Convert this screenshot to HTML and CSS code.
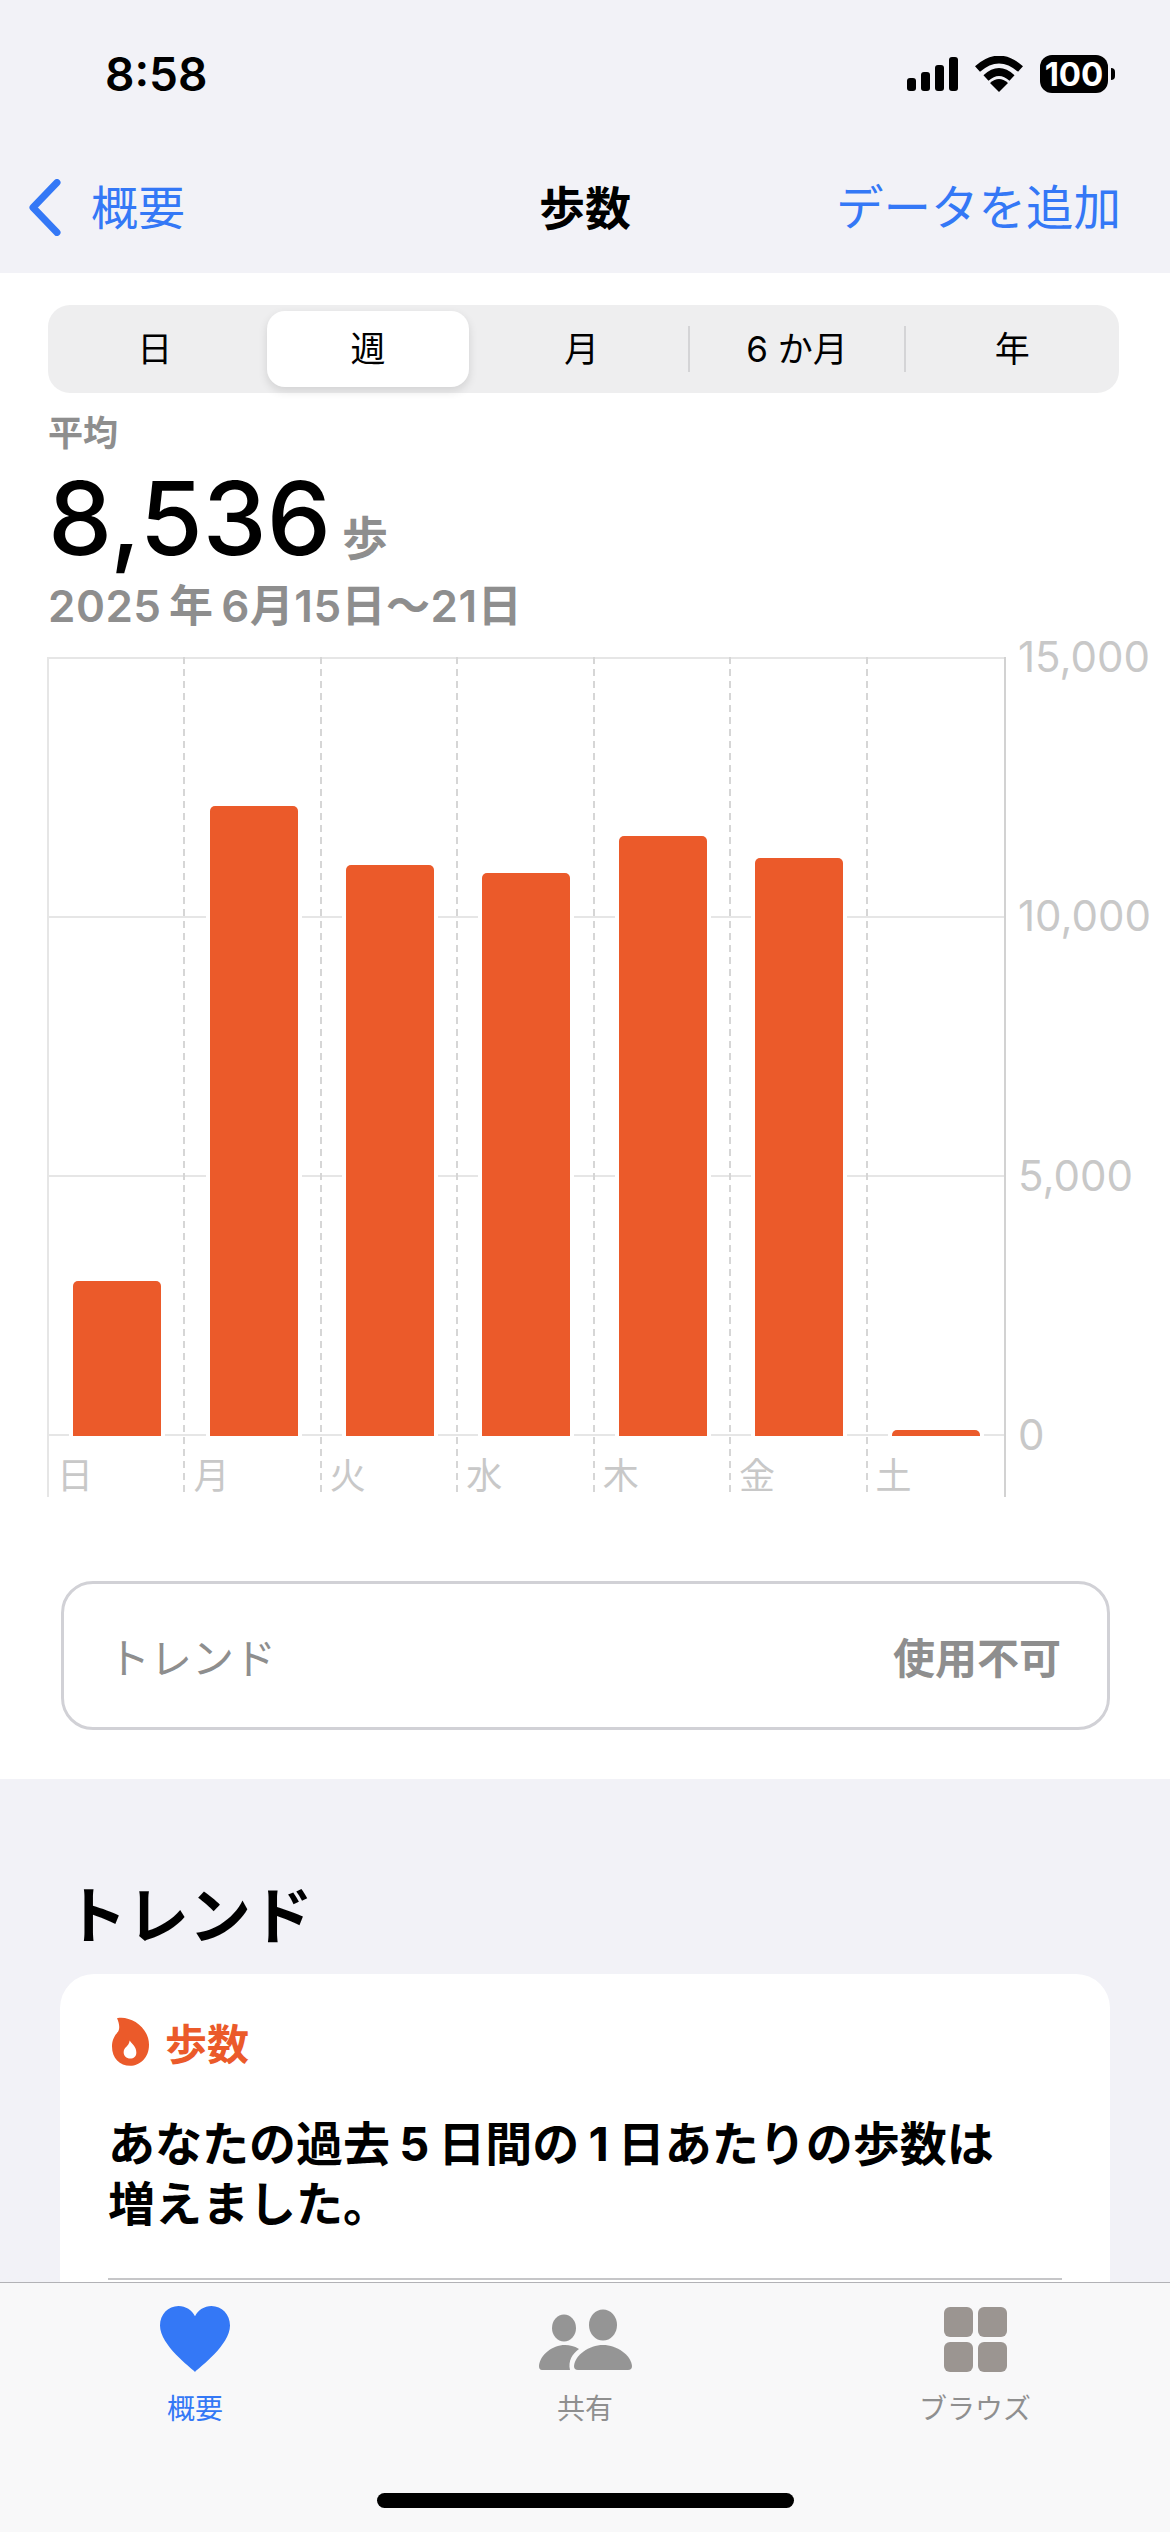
FILE: index.html
```html
<!DOCTYPE html>
<html lang="ja">
<head>
<meta charset="utf-8">
<title>歩数</title>
<link rel="stylesheet" href="styles.css">
</head>
<body>
<div class="app">
  <header class="top">
    <div class="status">
      <span class="time">8:58</span>
      <div class="status-icons">
        <svg class="signal" width="51" height="34" viewBox="0 0 51 34"><rect x="0" y="21" width="9" height="13" rx="3"/><rect x="14" y="15" width="9" height="19" rx="3"/><rect x="28" y="8" width="9" height="26" rx="3"/><rect x="42" y="0" width="9" height="34" rx="3"/></svg>
        <svg class="wifi" width="48" height="36" viewBox="0 0 48 36"><path d="M2.500 13 Q24 -6 45.500 13" fill="none" stroke="#000" stroke-width="7.500"/><path d="M11 22 Q24 10 37 22" fill="none" stroke="#000" stroke-width="7.500"/><path d="M24 36 L15 27 Q24 19 33 27 Z"/></svg>
        <div class="battery"><span class="battery-body">100</span><span class="battery-nub"></span></div>
      </div>
    </div>
    <nav class="nav">
      <div class="back">
        <svg class="chevron" width="33" height="57" viewBox="0 0 33 57"><path d="M29 3.500 L5 28.500 L29 53.500" fill="none" stroke="#3478f6" stroke-width="7" stroke-linecap="round" stroke-linejoin="round"/></svg>
        <span>概要</span>
      </div>
      <div class="title">歩数</div>
      <div class="add">データを追加</div>
    </nav>
  </header>
  <main class="content">
    <section class="panel">
      <div class="segments">
        <div class="seg">日</div>
        <div class="seg seg-on">週</div>
        <div class="seg">月</div>
        <i class="seg-div"></i>
        <div class="seg">6 か月</div>
        <i class="seg-div"></i>
        <div class="seg">年</div>
      </div>
      <div class="avg-label">平均</div>
      <div class="avg-row"><span class="avg-num">8,536</span><span class="avg-unit">歩</span></div>
      <div class="avg-date">2025 年 6月15日〜21日</div>
      <div class="chart">
        <div class="plot">
          <div class="gridlines"><i></i><i></i><i></i><i></i></div>
          <div class="day"><div class="bar-area"><div class="bar" style="height:155px"></div></div><div class="day-label">日</div></div>
          <div class="day"><div class="bar-area"><div class="bar" style="height:630px"></div></div><div class="day-label">月</div></div>
          <div class="day"><div class="bar-area"><div class="bar" style="height:571px"></div></div><div class="day-label">火</div></div>
          <div class="day"><div class="bar-area"><div class="bar" style="height:563px"></div></div><div class="day-label">水</div></div>
          <div class="day"><div class="bar-area"><div class="bar" style="height:600px"></div></div><div class="day-label">木</div></div>
          <div class="day"><div class="bar-area"><div class="bar" style="height:578px"></div></div><div class="day-label">金</div></div>
          <div class="day"><div class="bar-area"><div class="bar" style="height:6px"></div></div><div class="day-label">土</div></div>
        </div>
        <div class="axis">
          <div class="tick">15,000</div>
          <div class="tick">10,000</div>
          <div class="tick">5,000</div>
          <div class="tick">0</div>
        </div>
      </div>
      <div class="trend-box"><span class="trend-name">トレンド</span><span class="trend-state">使用不可</span></div>
    </section>
    <section class="trends">
      <h2 class="trends-title">トレンド</h2>
      <div class="card">
        <div class="card-head">
          <svg class="flame" width="37" height="49" viewBox="67 82 111 146"><path fill-rule="evenodd" fill="#eb5a2a" d="M82 85 C120 76 178 110 178 165 C178 205 150 228 122 228 C90 228 67 205 67 170 C67 150 75 137 85 126 C92 115 88 98 82 85Z M120 152 C128 165 140 170 140 188 C140 200 132 206 122 206 C110 206 102 198 102 187 C102 172 118 170 120 152Z"/></svg>
          <span class="card-kind">歩数</span>
        </div>
        <p class="card-text">あなたの過去 5 日間の 1 日あたりの歩数は<br>増えました。</p>
        <div class="card-line"></div>
      </div>
    </section>
  </main>
  <footer class="tabbar">
    <div class="tabs">
      <div class="tab tab-on">
        <svg class="tab-icon" width="70" height="66" viewBox="0 0 68 64"><path fill="#3478f6" d="M34 64 C30 60 0 38 0 19 C0 8 8 0 18 0 C25 0 31 4 34 10 C37 4 43 0 50 0 C60 0 68 8 68 19 C68 38 38 60 34 64Z"/></svg>
        <span>概要</span>
      </div>
      <div class="tab">
        <svg class="tab-icon" width="93" height="66" viewBox="0 0 93 66"><g fill="#959595"><ellipse cx="25" cy="22" rx="12" ry="13.500"/><ellipse cx="64" cy="19" rx="14" ry="15.500"/><path d="M3 64 Q0 64 0 60 C1 49 13 39 26 39 C31 39 35 40 40 43 C33 48 29 55 31 64 Z"/><path d="M39 64 Q35 64 35 60 C36 49 50 39 64 39 C78 39 92 49 93 60 Q93 64 89 64 Z"/></g></svg>
        <span>共有</span>
      </div>
      <div class="tab">
        <svg class="tab-icon" width="63" height="66" viewBox="0 0 63 66"><g fill="#9b9591"><rect x="0" y="1" width="29" height="30" rx="6"/><rect x="34" y="1" width="29" height="30" rx="6"/><rect x="0" y="36" width="29" height="30" rx="6"/><rect x="34" y="36" width="29" height="30" rx="6"/></g></svg>
        <span>ブラウズ</span>
      </div>
    </div>
    <div class="home"></div>
  </footer>
</div>
</body>
</html>
```
FILE: styles.css
```css
* { box-sizing: border-box; }
html, body { margin: 0; padding: 0; }
body {
  width: 1170px;
  height: 2532px;
  overflow: hidden;
  background: #f2f2f7;
  color: #000;
  font-family: Inter, "Noto Sans CJK JP", sans-serif;
}
.app { width: 1170px; height: 2532px; display: flex; flex-direction: column; overflow: hidden; }

/* header */
.top { height: 273px; flex: none; background: #f2f2f7; }
.status { height: 148px; display: flex; align-items: center; justify-content: space-between; padding: 0 55px 0 105px; }
.time { font-size: 46px; font-weight: 600; line-height: 56px; }
.status-icons { display: flex; align-items: center; gap: 17px; }
.battery { display: flex; align-items: center; gap: 3px; }
.battery-body { width: 68px; height: 38px; border-radius: 12px; background: #000; color: #fff; font-size: 33px; font-weight: 700; line-height: 38px; text-align: center; }
.battery-nub { width: 4px; height: 12px; border-radius: 0 6px 6px 0; background: #000; }
.nav { height: 124px; display: grid; grid-template-columns: 1fr auto 1fr; align-items: center; padding: 0 28px 5px; }
.back { display: flex; align-items: center; gap: 30px; color: #3478f6; font-size: 47px; line-height: 60px; }
.title { font-size: 46px; font-weight: 700; line-height: 60px; }
.add { text-align: right; padding-right: 21px; color: #3478f6; font-size: 47.500px; line-height: 60px; }

/* panel */
.content { flex: 1; min-height: 0; overflow: hidden; }
.panel { background: #fff; height: 1506px; padding: 32px 0 0 48px; }
.segments { width: 1071px; height: 88px; padding: 6px 0; border-radius: 22px; background: #eeeeef; display: flex; align-items: center; }
.seg { flex: 1; height: 76px; margin: 0 6px; border-radius: 18px; font-size: 35px; line-height: 76px; text-align: center; }
.seg-on { background: #fff; box-shadow: 0 4px 10px rgba(0, 0, 0, .12); }
.seg-div { flex: none; width: 2px; height: 46px; background: #d4d4d6; }
.avg-label { margin-top: 20px; height: 40px; font-size: 35px; font-weight: 600; line-height: 40px; color: #8e8e8e; }
.avg-row { height: 131px; display: flex; align-items: baseline; gap: 11px; }
.avg-num { font-size: 102px; line-height: 131px; font-weight: 500; }
.avg-unit { font-size: 46px; font-weight: 600; color: #8e8e8e; }
.avg-date { height: 44px; font-size: 44px; font-weight: 600; line-height: 44px; color: #8e8e8e; letter-spacing: .5px; word-spacing: -4px; }

/* chart */
.chart { margin: 29px 0 0 -1px; height: 840px; display: flex; align-items: flex-start; }
.plot { position: relative; width: 959px; height: 840px; display: flex; border-left: 2px solid #e6e6e6; border-right: 2px solid #d2d2d2; }
.gridlines { position: absolute; left: 0; right: 0; top: 0; height: 779px; display: flex; flex-direction: column; justify-content: space-between; }
.gridlines i { display: block; height: 2px; background: #e6e6e6; }
.day { position: relative; flex: 1; display: flex; flex-direction: column; background: repeating-linear-gradient(#d6d6d6 0 7px, transparent 7px 12px) right top / 2px 100% no-repeat; }
.day:last-child { background: none; }
.bar-area { height: 779px; display: flex; align-items: flex-end; justify-content: center; }
.bar { width: 88px; background: #eb5a2a; border-radius: 5px 5px 0 0; box-shadow: 0 0 0 4px #fff; }
.day-label { padding: 20px 0 0 8px; font-size: 36px; line-height: 40px; color: #c8c8c8; }
.axis { margin-top: -22px; padding-left: 12px; }
.tick { height: 259.300px; font-size: 42px; line-height: 44px; color: #c8c8c8; }

/* trend box */
.trend-box { margin: 84px 0 0 13px; width: 1049px; height: 149px; border: 3px solid #d1d1d6; border-radius: 32px; display: flex; align-items: center; justify-content: space-between; padding: 0 46px 0 44px; }
.trend-name { font-size: 42px; color: #8e8e8e; }
.trend-state { font-size: 42px; font-weight: 600; color: #8e8e8e; }

/* trends */
.trends { padding: 103px 60px 0; }
.trends-title { margin: 0 0 22px 5px; font-size: 62px; font-weight: 700; line-height: 70px; }
.card { background: #fff; border-radius: 34px; padding: 43px 48px 0 52px; height: 600px; }
.card-head { display: flex; align-items: flex-start; gap: 16px; height: 49px; }
.card-kind { font-size: 42px; font-weight: 700; color: #eb5a2a; line-height: 56px; }
.card-text { margin: 48px 0 0 -4px; font-size: 47px; font-weight: 700; line-height: 60px; word-spacing: -2px; }
.card-line { margin-top: 44px; margin-left: -4px; height: 2px; background: #c6c6c8; }

/* tab bar */
.tabbar { height: 250px; flex: none; background: #f8f8f9; border-top: 1px solid #b2b2b6; display: flex; flex-direction: column; align-items: center; }
.tabs { width: 100%; height: 210px; display: flex; }
.tab { flex: 1; padding-top: 23px; display: flex; flex-direction: column; align-items: center; font-size: 28px; line-height: 40px; color: #8f8f8f; }
.tab-on { color: #3478f6; }
.tab-icon { margin-bottom: 17px; }
.home { width: 417px; height: 15px; border-radius: 8px; background: #000; }
```
